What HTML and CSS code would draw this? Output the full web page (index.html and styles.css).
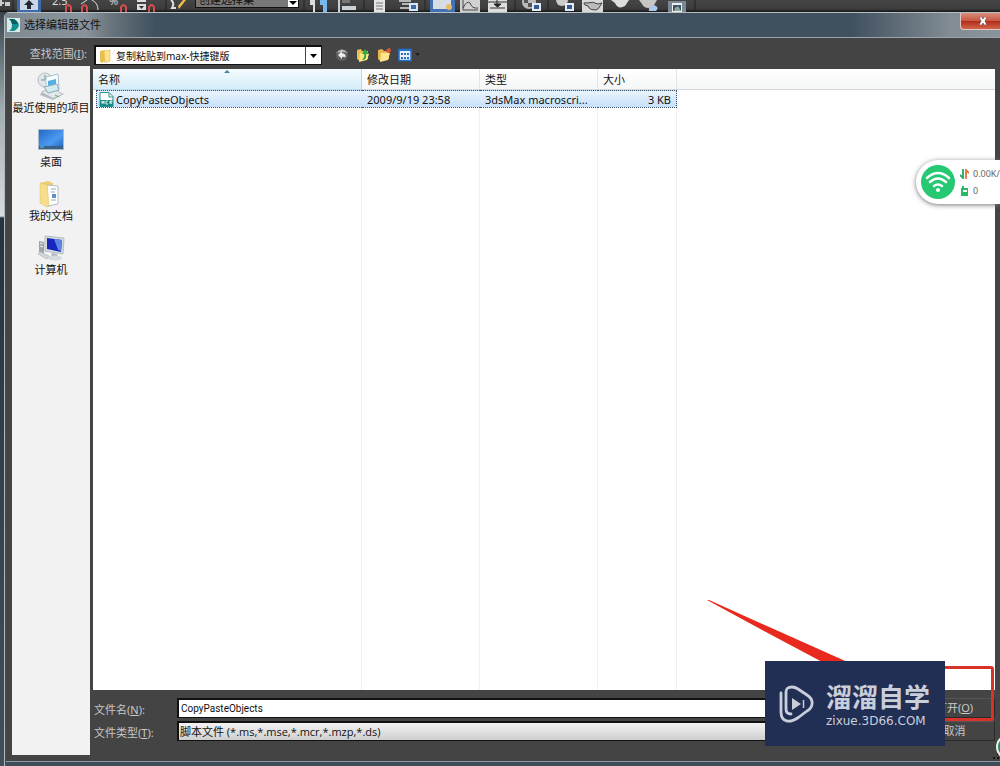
FILE: index.html
```html
<!DOCTYPE html>
<html lang="zh-CN">
<head>
<meta charset="utf-8">
<title>选择编辑器文件</title>
<link rel="stylesheet" href="styles.css">
</head>
<body>
<div class="toolbar">
  <svg class="tools" width="700" height="12" viewBox="0 0 700 12" aria-hidden="true">
    <path d="M0 3h4M1 0v6" stroke="#ccc" stroke-width="2" fill="none"/><path d="M5 2h5v4H5z" fill="#ccc"/>
    <path d="M13 0v12M166 0v12M304 0v12M364 0v12M425 0v12M515 0v12M548 0v12M695 0v12" stroke="#222" stroke-width="1"/>
    <rect x="17" y="-3" width="24" height="15" fill="#3c6cae"/><rect x="20" y="-3" width="18" height="13" fill="#c8d6e8"/>
    <path d="M29 0l5 5h-3v4h-4V5h-3z" fill="#202834"/>
    <g fill="none" stroke="#d44d4d" stroke-width="2"><path d="M66 12V7q2.500-4 5 0v5M82 12V7q2.500-4 5 0v5M121 12V7q2.500-4 5 0v5M149 12V7q2.500-4 5 0v5"/></g>
    <path d="M81 4l6-4M92 0q6 3 6 10" stroke="#ddd" fill="none"/>
    <path d="M137 0h9v2h-9zM137 4h9v6h-9z" fill="#ddd"/><path d="M139 6h5l-2.500 3z" fill="#333"/>
    <path d="M171 0q4 3 1 8h4" stroke="#ddd" stroke-width="2" fill="none"/><path d="M186 0l-7 9-1-3 5-6z" fill="#f0bd45"/>
    <path d="M310 0h5v12h-2V5h-3z" fill="#ddd"/><path d="M320 0h7v12h-4V5h-3z" fill="#79b8ee"/>
    <path d="M338 0h2v12h-2zM342 6h14v4h-14z" fill="#cbd1d8"/><path d="M342 0h8v3h-8z" fill="#777"/>
    <path d="M374 0h11v12h-11z" fill="#e5e5e5"/><path d="M376 3h7M376 6h7M376 9h7" stroke="#777"/>
    <path d="M399 1h12M402 4h11M400 8h9" stroke="#ddd" stroke-width="1.500"/><rect x="409" y="3" width="9" height="8" fill="#d7e7fa"/><rect x="411" y="5" width="5" height="4" fill="#416aa1"/>
    <path d="M430 0h25v12h-25z" fill="#4172b3"/><path d="M433 0h18v9h-18z" fill="#d7dde2"/><circle cx="449" cy="7" r="3" fill="#e8ba65"/>
    <path d="M460 0h20v12h-20z" fill="#d1d1d1"/><path d="M463 0v10h15M463 8q4-8 7-5 2 6 8 5" stroke="#444" fill="none"/>
    <path d="M488 0h19v12h-19z" fill="#ddd"/><path d="M488 2h19M490 8h15" stroke="#333"/><path d="M497 0v4M494 4h7l-3.500 3z" stroke="#222" fill="#222"/>
    <circle cx="529" cy="2" r="7" fill="#bbb"/><path d="M524 0h4v3h-4zM528 3h4v4h-4z" fill="#555"/><path d="M532 3h9v8h-9z" fill="#e2ebf6"/><path d="M534 5h5v4h-5z" fill="#375b91"/>
    <circle cx="562" cy="0" r="6" fill="#ccc"/><path d="M565 3h9v8h-9z" fill="#e2ebf6"/><path d="M567 5h5v4h-5z" fill="#375b91"/>
    <path d="M582 0h21v12h-21z" fill="#d9d9d9"/><path d="M587 3q-5-1-2 2l3 1q1 4 8 4 3-1 4-4l2-3-4 1q-5-3-11-1z" stroke="#444" fill="#bbb"/>
    <path d="M611 0l4 3q3 7 10 3l4-6z" fill="#ddd"/>
    <path d="M639 0h18l-4 7q-8 3-11-3z" fill="#c5c5c5"/><path d="M649 11q-1-4 3-4 1-3 4-1 3 2 0 5z" fill="#a9c9ed"/>
    <path d="M668 1h18v11h-18z" fill="#7b8794"/><path d="M672 3h10v9h-10z" fill="#eee"/><path d="M673 5h8v6h-8z" fill="#3d5262"/><path d="M675 8l3-2 3 5h-7z" fill="#8da69d"/>
  </svg>
  <span class="tool-text snap">2.5</span>
  <span class="tool-text percent">%</span>
  <select class="set-select" aria-label="选择集"><option>创建选择集</option></select>
</div>

<div class="desktop">
  <div class="backdrop"></div>
  <main class="window">
    <header class="titlebar">
      <svg width="13" height="14" viewBox="0 0 13 14" aria-hidden="true"><path d="M0 0h13v14H0z" fill="#d8e9e9"/><path d="M2 1h5q4 2 5 6-1 4-5 6H2q3-2 3-6T2 1z" fill="#128f91"/><path d="M2 1h5q3 2 4 5H5Q5 3 2 1z" fill="#075f61"/></svg>
      <h1 class="title">选择编辑器文件</h1>
      <button class="close" aria-label="关闭"><svg width="10" height="8" viewBox="0 0 10 8"><path d="M1 0h3l1 2 1-2h3L7 4l2 4H6L5 6 4 8H1l2-4z" fill="#fff" stroke="#5e3b3b" stroke-width=".6"/></svg></button>
    </header>

    <div class="content">
      <aside class="left">
        <label class="look-label" for="location">查找范围(<u>I</u>):</label>
        <nav class="places">
          <button class="place">
            <svg width="28" height="28" viewBox="0 0 28 28" aria-hidden="true"><path d="M5 19l10-3 12 6-11 6L3 23z" fill="#b5bcc1"/><path d="M5 20l10-3 10 5-9 4z" fill="#e5e8ea"/><circle cx="8" cy="8" r="7" fill="#e1e7e8" stroke="#b4bec2"/><path d="M8 3v5H4" fill="none" stroke="#7a8e99"/><path d="M9 5l12-3 1 15-13 2z" fill="#f8fdff" stroke="#a5c3d2"/><path d="M11 9l8-2v5l-8 2z" fill="#55afe1"/><path d="M7 15l13-3 2 6-11 3z" fill="#d4eaf1" stroke="#8eaab5"/><path d="M18 23l4 2" stroke="#54b86e"/></svg>
            <span>最近使用的项目</span>
          </button>
          <button class="place">
            <svg width="28" height="28" viewBox="0 0 28 28" aria-hidden="true"><defs><linearGradient id="screen" x2="1" y2="1"><stop stop-color="#2469c4"/><stop offset=".6" stop-color="#4b9af1"/><stop offset="1" stop-color="#2565b5"/></linearGradient></defs><path d="M1 3h26v21H1z" fill="#a9b8c4"/><path d="M2 4h24v18H2z" fill="url(#screen)"/><path d="M2 20h24v3H2z" fill="#3b6286"/><path d="M3 21h4" stroke="#62d0e8"/></svg>
            <span>桌面</span>
          </button>
          <button class="place">
            <svg width="28" height="28" viewBox="0 0 28 28" aria-hidden="true"><path d="M3 3l8-2 5 2v22l-5 2-8-4z" fill="#e9cf73"/><path d="M10 5l11 1v18l-11 2z" fill="#fff" stroke="#b6bdc5"/><path d="M14 9h5M14 12h4M14 20h5" stroke="#91a7bd"/><path d="M15 14h4v4h-4z" fill="#638fc9"/><path d="M3 3l7 2 2 19-2 3-7-4z" fill="#f5dd8b" stroke="#dfc36c" stroke-width=".5"/></svg>
            <span>我的文档</span>
          </button>
          <button class="place">
            <svg width="28" height="28" viewBox="0 0 28 28" aria-hidden="true"><path d="M2 7l5 1v12l-5-2z" fill="#9ba4aa"/><path d="M3 9l3 1M3 12l3 1" stroke="#eee"/><path d="M8 2l19 2-1 16-18-3z" fill="#d7dce1" stroke="#b3bcc3"/><path d="M10 4l15 2-1 12-14-3z" fill="#1726bc"/><path d="M17 5l8 1-1 11-3-1z" fill="#5b86e4"/><path d="M15 19l5 1 1 3h-7z" fill="#afb7bd"/><ellipse cx="18" cy="24" rx="7" ry="2.500" fill="#d5dade"/><path d="M3 18l9 4-2 3-9-5z" fill="#d1d6da" stroke="#bcc3c9"/></svg>
            <span>计算机</span>
          </button>
        </nav>
      </aside>

      <section class="right">
        <div class="location-bar">
          <div class="combo location">
            <select id="location"><option>复制粘贴到max-快捷键版</option></select>
            <svg class="folder" width="13" height="14" viewBox="0 0 13 14" aria-hidden="true"><path d="M1 2l5-1 1 11-5 2-1-2z" fill="#e9bf50"/><path d="M5 2l6-1v11l-5 2z" fill="#ffe28a" stroke="#ddb855" stroke-width=".6"/></svg>
            <span class="drop"><svg width="7" height="4" viewBox="0 0 7 4"><path d="M0 0h7L3.500 4z" fill="#000"/></svg></span>
          </div>
          <div class="nav-tools">
            <button aria-label="后退"><svg width="14" height="14" viewBox="0 0 14 14"><circle cx="7" cy="7" r="6" fill="#5f5f5f"/><path d="M1 5q6-7 12 0-6-2-12 0z" fill="#b9b9b9"/><path d="M7 3L3 7l4 4V9q3-1 3 1 2-4-3-5z" fill="#eee"/></svg></button>
            <button aria-label="上一级"><svg width="14" height="14" viewBox="0 0 14 14"><path d="M1 2l4-1 1 2h6v8l-8 2-3-2z" fill="#e9c04e"/><path d="M4 5l9 1-2 6-8 2z" fill="#ffe583"/><path d="M5 12q5 0 4-6h3L8 1 5 6h2q1 3-2 6z" transform="translate(1 0)" fill="#32a83e"/></svg></button>
            <button aria-label="新建文件夹"><svg width="14" height="14" viewBox="0 0 14 14"><path d="M1 2l4-1 2 2h5v8l-9 2-2-2z" fill="#e9b94f"/><path d="M4 5l9 0-2 7-8 2z" fill="#ffe58b"/><path d="M10 1l3-1 1 3-2 2-3-1z" fill="#e35436"/></svg></button>
            <button aria-label="查看"><svg width="23" height="14" viewBox="0 0 23 14"><path d="M1 1.500h12v11H1z" fill="#e5f3ff" stroke="#2374d2" stroke-width="1.500"/><path d="M1 1h12v2H1z" fill="#2374d2"/><path d="M3 5h2v2H3zm3 0h2v2H6zm3 0h2v2H9zM3 9h2v2H3zm3 0h2v2H6zm3 0h2v2H9z" fill="#356cad"/><path d="M17 5h5l-2.500 3z" fill="#1e1e1e"/></svg></button>
          </div>
        </div>

        <div class="list">
          <table class="files">
            <colgroup><col class="c-edge"><col class="c-name"><col class="c-date"><col class="c-type"><col class="c-size"><col></colgroup>
            <thead><tr><th colspan="2" class="sorted">名称<svg class="sort" width="6" height="3" viewBox="0 0 6 3"><path d="M0 3l3-3 3 3z" fill="#537f9e"/></svg></th><th>修改日期</th><th>类型</th><th>大小</th><th></th></tr></thead>
            <tbody>
              <tr class="selected"><td class="edge"></td><td class="name"><div class="file"><svg width="15" height="15" viewBox="0 0 15 15" aria-hidden="true"><path d="M1 .5h9l4 4v10H1z" fill="#fff" stroke="#279491"/><path d="M10 1v4h4" fill="none" stroke="#279491"/><path d="M1 8h13v6H1z" fill="#168a86"/><path d="M3 12V9l1 2 1-2v3M9 9H7v3h2M11 12V9h2v1h-2l2 2" fill="none" stroke="#fff" stroke-width=".8"/></svg>CopyPasteObjects</div></td><td>2009/9/19 23:58</td><td>3dsMax macroscri...</td><td class="size">3 KB</td><td class="edge"></td></tr>
              <tr class="empty"><td colspan="2"></td><td></td><td></td><td></td><td></td></tr>
            </tbody>
          </table>
        </div>

        <form class="form">
          <label for="filename">文件名(<u>N</u>):</label>
          <input id="filename" class="filename" type="text" value="CopyPasteObjects">
          <button class="action" type="button">打开(<u>O</u>)</button>
          <label for="filetype">文件类型(<u>T</u>):</label>
          <select id="filetype" class="filetype"><option>脚本文件 (*.ms,*.mse,*.mcr,*.mzp,*.ds)</option></select>
          <button class="action" type="button">取消</button>
        </form>
      </section>
    </div>
  </main>
</div>

<div class="traffic">
  <svg width="34" height="34" viewBox="0 0 34 34" aria-hidden="true"><circle cx="17" cy="17" r="17" fill="#26c872"/><g fill="none" stroke="#fff" stroke-width="2.600" stroke-linecap="round"><path d="M6 13q11-10 22 0M9 17q8-7 16 0M13 21q4-3 8 0"/></g><circle cx="17" cy="25" r="2" fill="#fff"/></svg>
  <div class="rates">
    <div class="rate"><svg width="9" height="10" viewBox="0 0 9 10"><path d="M3 0v9L0 6" stroke="#28a765" stroke-width="1.800" fill="none"/><path d="M6 10V1l3 3" stroke="#df7432" stroke-width="1.800" fill="none"/></svg><span>0.00K/</span></div>
    <div class="rate"><svg width="9" height="10" viewBox="0 0 9 10"><path d="M1 2h1V0h2v2h4v8H1z" fill="#29b866"/><path d="M3 4h4v2H3z" fill="#fff"/></svg><span>0</span></div>
  </div>
</div>

<div class="highlight"></div>
<svg class="pointer" width="145" height="66" viewBox="0 0 145 66" aria-hidden="true"><path d="M0 2L2 2 60 28 145 66 119 66 57 33z" fill="#e8291d"/></svg>
<svg class="grip" width="10" height="8" viewBox="0 0 10 8" aria-hidden="true"><path d="M7 0h2v2H7zM3 4h2v2H3zM7 4h2v2H7z" fill="#161616"/></svg>
<div class="bubble"></div>
<div class="brand">
  <svg width="35" height="38" viewBox="0 0 35 38" aria-hidden="true"><g fill="none" stroke="#c9cedb" stroke-width="2.800" stroke-linejoin="round" stroke-linecap="round"><path d="M12 29q-5 0-5-5V7q0-5 6-5 3 0 6 2l9 6q6 4 5 9 0 4-5 7l-8 6q-7 5-12 4-6-1-6-9V8"/></g><path d="M13 13l9 6-9 6z" fill="#c9cedb"/><path d="M24.500 15v8" stroke="#c9cedb" stroke-width="1.500"/></svg>
  <div class="brand-text"><strong>溜溜自学</strong><span>zixue.3D66.COM</span></div>
</div>
</body>
</html>
```
FILE: styles.css
```css
* { box-sizing: border-box; }

body {
  position: relative;
  display: flex;
  flex-direction: column;
  min-height: 100vh;
  margin: 0;
  overflow: hidden;
  background: #444;
  color: #111;
  font: 11px/16px "Noto Sans", "Noto Sans CJK SC", sans-serif;
}

button, input, select { margin: 0; font: inherit; color: inherit; }
svg { display: block; flex: none; }
u { text-underline-offset: 1px; }

.toolbar {
  position: relative;
  height: 12px;
  overflow: hidden;
  background: linear-gradient(#454545, #3c3c3c 9px, #151515);
}
.tool-text { position: absolute; top: -7px; color: #ddd; }
.snap { left: 52px; }
.percent { left: 109px; }
.set-select {
  position: absolute;
  top: -8px;
  left: 195px;
  width: 104px;
  height: 16px;
  padding: 0 0 0 3px;
  border: 1px solid #111;
  appearance: none;
  background: linear-gradient(90deg, #777 92px, #fff 92px);
  line-height: 14px;
}
.toolbar::after {
  content: "";
  position: absolute;
  top: 1px;
  left: 289px;
  border: 4px solid transparent;
  border-top-color: #000;
  border-bottom: 0;
}

.desktop { flex: 1; display: flex; background: #26333d; }
.backdrop {
  width: 4px;
  background: linear-gradient(#39434b, #a2adb4 100px, #d8dcde 204px, #26333d 206px, #40505a);
}
.window {
  flex: 1;
  display: flex;
  flex-direction: column;
  min-width: 0;
  padding-bottom: 4px;
  border-top: 1px solid #b7c0c5;
  border-left: 1px solid #aeb9bf;
  border-top-left-radius: 5px;
  background: #3f4d59;
}
.titlebar {
  display: flex;
  align-items: center;
  gap: 4px;
  height: 25px;
  padding-left: 2px;
  border-bottom: 1px solid #99a3a9;
  border-top-left-radius: 4px;
  background:
    linear-gradient(90deg, #7f8a92, #88939b 80px, #6a757e 105px, transparent 150px),
    linear-gradient(90deg, #40505f 85%, #68747e 91%, #818c94 95%, #89949b);
}
.title { margin: 0; font-size: 11px; font-weight: 400; line-height: 20px; }
.close {
  display: grid;
  place-items: center;
  align-self: flex-start;
  width: 40px;
  height: 17px;
  margin-left: auto;
  padding: 0 0 0 4px;
  border: 1px solid #e0c7c1;
  border-width: 0 0 1px 1px;
  border-bottom-left-radius: 4px;
  background: linear-gradient(#d98d7d, #c95842 48%, #ad2c1b 50%, #d4634a);
}

.content {
  flex: 1;
  display: flex;
  gap: 3px;
  margin-left: 1px;
  padding: 0 5px 0 6px;
  border-bottom: 1px solid #8b989f;
  background: #444;
}
.left { display: flex; flex-direction: column; width: 78px; padding-bottom: 6px; }
.look-label { height: 28px; padding-right: 3px; text-align: right; line-height: 32px; color: #c8c8c8; }
.places { flex: 1; display: flex; flex-direction: column; gap: 6px; padding-top: 6px; background: #f2f2f2; }
.place {
  display: flex;
  flex-direction: column;
  align-items: center;
  height: 48px;
  padding: 0;
  border: 0;
  background: none;
  white-space: nowrap;
}

.right { flex: 1; display: flex; flex-direction: column; min-width: 0; }
.location-bar { display: flex; gap: 13px; align-items: center; height: 31px; padding: 3px 0 0 1px; }
.combo { display: grid; width: 228px; height: 20px; border: 1px solid #111; border-width: 2px 1px 1px 2px; background: #fff; }
.combo > * { grid-area: 1 / 1; align-self: center; }
.combo select { width: 100%; height: 100%; padding: 0 0 0 20px; border: 0; appearance: none; background: transparent; font-size: 10px; }
.folder { margin-left: 3px; pointer-events: none; }
.drop { display: grid; place-items: center; align-self: stretch; justify-self: end; width: 16px; border-left: 1px solid #444; pointer-events: none; }
.nav-tools { display: flex; gap: 7px; }
.nav-tools button { padding: 0; border: 0; background: none; }

.list { flex: 1; display: flex; background: #fff; }
.files { width: 100%; table-layout: fixed; border-collapse: separate; border-spacing: 0; }
.c-edge { width: 3px; }
.c-name { width: 266px; }
.c-date, .c-type { width: 118px; }
.c-size { width: 79px; }
.files th {
  position: relative;
  height: 21px;
  padding: 1px 5px 0;
  border-right: 1px solid #e3e6e8;
  border-bottom: 1px solid #d5d8db;
  background: linear-gradient(#fff, #f5f6f7);
  text-align: left;
  font-weight: 400;
}
.files .sorted { background: linear-gradient(#f4fbfe, #d5edf8); border-color: #b8dcec; }
.sort { position: absolute; top: 1px; left: 49%; }
.files td { padding: 0 5px; border-right: 1px solid #f1f1f1; white-space: nowrap; }
.files td:last-child, .files th:last-child { border-right: 0; }
.files .selected td { height: 18px; border-top: 1px dotted #37506c; border-bottom: 1px dotted #37506c; border-right: 0; background: linear-gradient(#eaf4fd, #c8e0fa); line-height: 15px; }
.files .selected .name { padding: 0 0 0 2px; border-left: 1px dotted #37506c; }
.files .selected .size { border-right: 1px dotted #37506c; text-align: right; }
.files .selected .edge { padding: 0; border: 0; background: none; }
.file { display: flex; align-items: center; gap: 2px; }
.empty td { height: 100%; }

.form {
  display: grid;
  grid-template-columns: 80px 1fr 81px;
  grid-template-rows: 20px 20px;
  gap: 3px;
  padding: 8px 0 20px 1px;
  color: #c8c8c8;
}
.form label { line-height: 24px; }
.filename, .filetype {
  width: 100%;
  height: 20px;
  padding: 0 2px;
  border: 1px solid #111;
  border-width: 2px 1px 1px 2px;
  border-radius: 0;
  background: #fff;
  color: #111;
}
.filename { font-family: Roboto, sans-serif; font-size: 10px; }
.filetype { appearance: none; padding: 0 1px; background: linear-gradient(#f3f3f3, #cfcfcf); font-family: "Open Sans", "Noto Sans CJK SC", sans-serif; }
.action { padding: 0; border: 1px solid #292929; border-top-color: #555; background: #444; }

.traffic {
  position: absolute;
  top: 160px;
  right: 0;
  display: flex;
  align-items: center;
  gap: 5px;
  width: 84px;
  height: 44px;
  padding-left: 5px;
  border-radius: 22px 0 0 22px;
  background: #fff;
  box-shadow: 0 1px 5px #777;
}
.rates { flex: 1; min-width: 0; color: #666; font: 9px/17px "Noto Sans", sans-serif; }
.rate { display: flex; align-items: center; gap: 4px; }

.highlight { position: absolute; right: 6px; bottom: 45px; width: 70px; height: 55px; border: 3px solid #d93329; border-radius: 3px; }
.pointer { position: absolute; right: 148px; bottom: 102px; }
.grip { position: absolute; right: 0; bottom: 5px; }
.bubble { position: absolute; right: -18px; bottom: 7px; width: 22px; height: 24px; border: 2px solid #e3f2ea; border-radius: 50%; background: #218b5a; }
.brand {
  position: absolute;
  right: 55px;
  bottom: 20px;
  display: flex;
  align-items: center;
  gap: 12px;
  width: 180px;
  height: 85px;
  padding-left: 14px;
  background: #222f55;
  color: #c9cedb;
}
.brand-text { display: flex; flex-direction: column; padding-bottom: 4px; }
.brand-text strong { font: 700 26px/38px "Noto Sans CJK SC", sans-serif; }
.brand-text span { font: 12px/12px "DejaVu Sans", sans-serif; }
```
